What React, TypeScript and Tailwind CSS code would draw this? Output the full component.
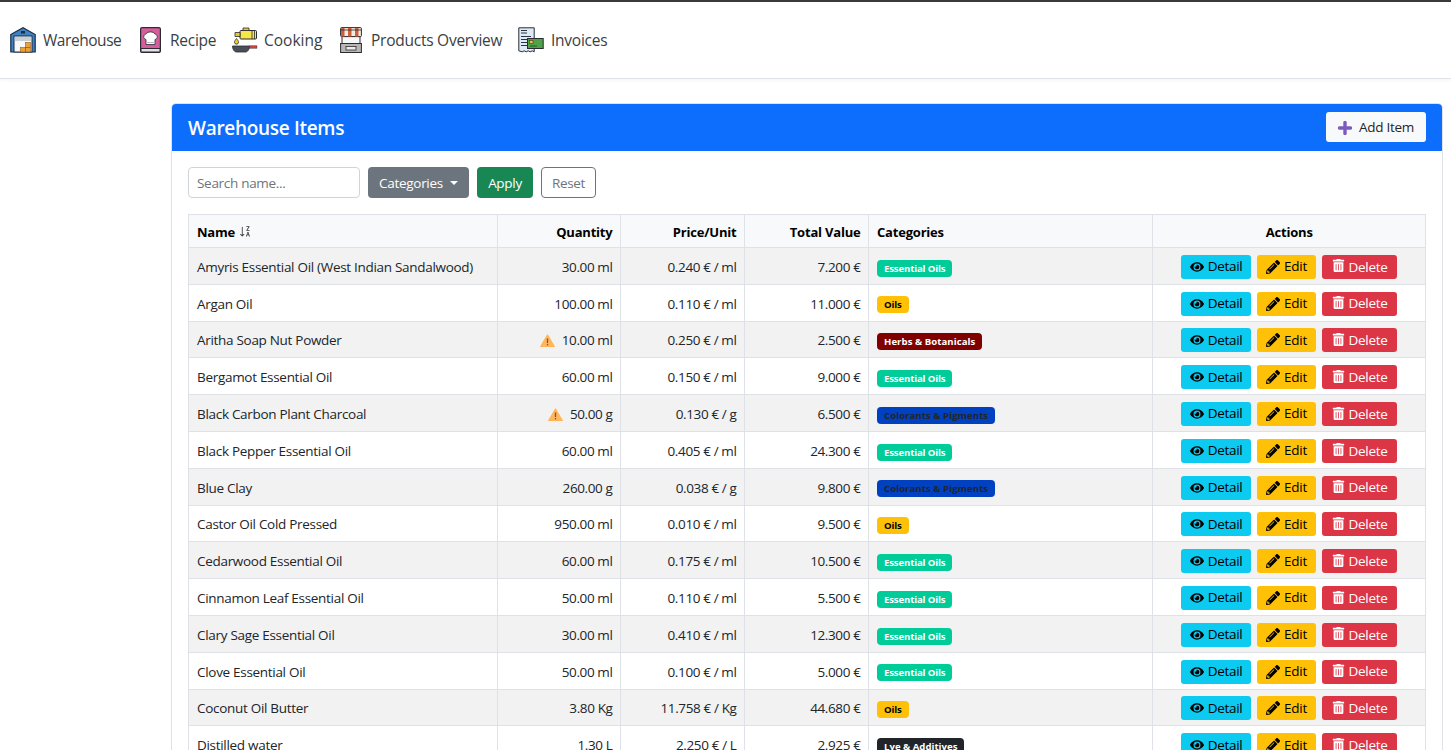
import type { ReactNode } from "react";
import { FaEye, FaPencilAlt, FaTrashAlt } from "react-icons/fa";
import { BsSortAlphaDownAlt } from "react-icons/bs";

const SEGOE = "font-['Open_Sans',sans-serif]";

type Cat = "essential" | "oils" | "herbs" | "colorants" | "lye";

const CATS: Record<Cat, { label: string; cls: string }> = {
  essential: { label: "Essential Oils", cls: "bg-[#00cc99] text-white tracking-[-0.15px]" },
  oils: { label: "Oils", cls: "bg-[#ffc107] text-black tracking-[-0.15px]" },
  herbs: { label: "Herbs & Botanicals", cls: "bg-[#800000] text-white tracking-[0.05px]" },
  colorants: { label: "Colorants & Pigments", cls: "bg-[#0041c2] text-[#212529] tracking-[0.05px]" },
  lye: { label: "Lye & Additives", cls: "bg-[#212529] text-white" },
};

const items: { name: string; qty: string; price: string; total: string; cat: Cat; warn?: boolean }[] = [
  { name: "Amyris Essential Oil (West Indian Sandalwood)", qty: "30.00 ml", price: "0.240 € / ml", total: "7.200 €", cat: "essential" },
  { name: "Argan Oil", qty: "100.00 ml", price: "0.110 € / ml", total: "11.000 €", cat: "oils" },
  { name: "Aritha Soap Nut Powder", qty: "10.00 ml", price: "0.250 € / ml", total: "2.500 €", cat: "herbs", warn: true },
  { name: "Bergamot Essential Oil", qty: "60.00 ml", price: "0.150 € / ml", total: "9.000 €", cat: "essential" },
  { name: "Black Carbon Plant Charcoal", qty: "50.00 g", price: "0.130 € / g", total: "6.500 €", cat: "colorants", warn: true },
  { name: "Black Pepper Essential Oil", qty: "60.00 ml", price: "0.405 € / ml", total: "24.300 €", cat: "essential" },
  { name: "Blue Clay", qty: "260.00 g", price: "0.038 € / g", total: "9.800 €", cat: "colorants" },
  { name: "Castor Oil Cold Pressed", qty: "950.00 ml", price: "0.010 € / ml", total: "9.500 €", cat: "oils" },
  { name: "Cedarwood Essential Oil", qty: "60.00 ml", price: "0.175 € / ml", total: "10.500 €", cat: "essential" },
  { name: "Cinnamon Leaf Essential Oil", qty: "50.00 ml", price: "0.110 € / ml", total: "5.500 €", cat: "essential" },
  { name: "Clary Sage Essential Oil", qty: "30.00 ml", price: "0.410 € / ml", total: "12.300 €", cat: "essential" },
  { name: "Clove Essential Oil", qty: "50.00 ml", price: "0.100 € / ml", total: "5.000 €", cat: "essential" },
  { name: "Coconut Oil Butter", qty: "3.80 Kg", price: "11.758 € / Kg", total: "44.680 €", cat: "oils" },
  { name: "Distilled water", qty: "1.30 L", price: "2.250 € / L", total: "2.925 €", cat: "lye" },
];

const WarehouseIcon = () => (
  <svg viewBox="0 0 26 26" className="w-[26px] h-[26px]">
    <path d="M.8 7.500 13 .8l12.200 6.700V25H.8z" fill="#3d83c4" stroke="#1d2d44" strokeWidth="1.200" />
    <rect x="4" y="9" width="18" height="16" fill="#f6f8fa" stroke="#1d2d44" />
    <path d="M4 11h18M4 13h18" stroke="#9aa6b2" />
    <rect x="11" y="4" width="4" height="2.500" fill="#1d2d44" />
    <rect x="10.500" y="20.500" width="5" height="4.500" fill="#f0a030" stroke="#7a4a10" strokeWidth=".5" />
    <rect x="15.500" y="20.500" width="5" height="4.500" fill="#f0a030" stroke="#7a4a10" strokeWidth=".5" />
    <rect x="15.500" y="15.500" width="5" height="5" fill="#f0a030" stroke="#7a4a10" strokeWidth=".5" />
  </svg>
);

const RecipeIcon = () => (
  <svg viewBox="0 0 21 26" className="w-[21px] h-[26px]">
    <rect x=".6" y=".6" width="19.800" height="24.800" rx="1.500" fill="#d65f9b" stroke="#2b2b33" strokeWidth="1.200" />
    <path d="M1 21.500h19v3.500H1z" fill="#ecdce6" stroke="#2b2b33" />
    <path d="M6 12.500c-3-.5-3-5 0-5.500 1.200-2.800 7.800-2.800 9 0 3 .5 3 5 0 5.500V17.500H6z" fill="#fff" stroke="#2b2b33" strokeWidth=".8" />
    <path d="M6 15.500h9" stroke="#b8b8c0" />
  </svg>
);

const CookingIcon = () => (
  <svg viewBox="0 0 26 26" className="w-[26px] h-[26px]">
    <rect x="8" y="3.500" width="16.500" height="8.500" rx="1" fill="#f7e64a" stroke="#2b2b33" />
    <path d="M11 1h6v2.500h-6z" fill="#e8c630" stroke="#2b2b33" strokeWidth=".8" />
    <path d="M3 5.500h5v4H3z" fill="#e8c630" stroke="#2b2b33" strokeWidth=".8" />
    <path d="M20 3.500v8.500M22.500 3.500v8.500" stroke="#2b2b33" strokeWidth=".8" />
    <path d="M4.500 11.500c1.500 2 2 2.700 2 3.700a2 2 0 0 1-4 0c0-1 .5-1.700 2-3.700z" fill="#f4d320" stroke="#2b2b33" strokeWidth=".8" />
    <path d="M.5 19h17c0 3.500-2 6-4 6H4.500c-2 0-4-2.500-4-6z" fill="#4a4f57" stroke="#2b2b33" strokeWidth=".8" />
    <rect x="17.500" y="18.800" width="7.500" height="2.400" fill="#c8423a" stroke="#2b2b33" strokeWidth=".4" />
  </svg>
);

const StoreIcon = () => (
  <svg viewBox="0 0 22 26" className="w-[22px] h-[26px]">
    <path d="M2 9h18v9H2z" fill="#f8f8f8" stroke="#2b2b33" />
    <rect x=".6" y="16.500" width="20.800" height="9" fill="#b9b5b0" stroke="#2b2b33" />
    <rect x="6" y="19.500" width="10" height="3.500" fill="#ececec" stroke="#2b2b33" strokeWidth=".8" />
    <rect x=".6" y=".6" width="20.800" height="9" rx="1" fill="#f3ece2" stroke="#2b2b33" />
    <path d="M1 1h3.500v8.500H1zM8 1h3.500v8.500H8zM15 1h3.500v8.500H15z" fill="#cf5f38" />
    <path d="M.6 3h20.800" stroke="#2b2b33" strokeWidth=".8" />
  </svg>
);

const InvoiceIcon = () => (
  <svg viewBox="0 0 26 26" className="w-[26px] h-[26px]">
    <path d="M.8.8h15.400v24l-2-1-2 1-2-1-2 1-2-1-2 1-3.400-1z" fill="#dcebf5" stroke="#2b2b33" />
    <path d="M3 3.500h6M3 6h6M3 9.500h10M3 12.500h6M3 15.500h6M3 18.500h6" stroke="#2b3440" strokeWidth="1" />
    <rect x="9.500" y="11.500" width="15.700" height="10" fill="#4fa14a" stroke="#2b2b33" />
    <rect x="11.500" y="13.500" width="3.500" height="3" fill="#f0c040" stroke="#2b2b33" strokeWidth=".5" />
    <path d="M12 19h7" stroke="#235f24" />
  </svg>
);

const NavItem = ({ icon, label, className }: { icon: ReactNode; label: string; className: string }) => (
  <a className={`flex items-center h-[26px] text-[15.5px] text-[#3a3f45] ${className}`}>
    {icon}
    <span className="mt-[2px]">{label}</span>
  </a>
);

const Warn = () => (
  <svg viewBox="0 0 16 14" className="inline-block w-[15px] h-[13px] mr-[7px] align-[-2px]">
    <path d="M8 .8 15.500 13.500H.5z" fill="#ffb65c" stroke="#ffb04f" strokeLinejoin="round" />
    <rect x="7.300" y="4.800" width="1.400" height="5" fill="#7a5a30" />
    <rect x="7.300" y="10.800" width="1.400" height="1.400" fill="#7a5a30" />
  </svg>
);

const Btn = ({ cls, icon, label, labelCls = "" }: { cls: string; icon: ReactNode; label: string; labelCls?: string }) => (
  <button className={`h-6 flex items-center justify-center gap-[4px] rounded-[3px] text-[13.5px] tracking-[-0.3px] leading-none ${cls}`}>
    {icon}
    <span className={labelCls}>{label}</span>
  </button>
);

const th = "border border-[#dee2e6] bg-[#f8f9fa] pl-2 pr-[7.5px] pt-[3px] font-bold text-[13px] tracking-[-0.2px] text-black";
const td = "border border-[#dee2e6] pl-2 pr-[7.5px] pt-[2px] h-[36.8px] text-[13.5px] text-[#212529]";
const num = "text-right tracking-[-0.38px]";

export default function App() {
  return (
    <div className={`h-[750px] overflow-hidden bg-white ${SEGOE}`}>
      <nav className="h-[79px] border-t-2 border-b border-t-[#3a3a3a] border-b-[#dee2e6] flex items-center pl-[10px] shadow-[0_1px_4px_rgba(0,0,0,0.05)]">
        <NavItem icon={<WarehouseIcon />} label="Warehouse" className="w-[130px] gap-[7px] tracking-[-0.45px]" />
        <NavItem icon={<RecipeIcon />} label="Recipe" className="w-[92px] gap-[9px] tracking-[-0.25px]" />
        <NavItem icon={<CookingIcon />} label="Cooking" className="w-[108px] gap-[6px]" />
        <NavItem icon={<StoreIcon />} label="Products Overview" className="w-[178px] gap-[9px] tracking-[-0.25px]" />
        <NavItem icon={<InvoiceIcon />} label="Invoices" className="w-[100px] gap-[7px] tracking-[-0.25px]" />
      </nav>

      <main className="pt-[24px] pl-[171px] pr-[8px]">
        <section className="border border-[#dee2e6] rounded-[5px] overflow-hidden">
          <header className="h-[47px] bg-[#0d6efd] flex items-center justify-between pl-4 pr-4">
            <h1 className="pt-[2px] text-[19px] tracking-[-0.3px] font-semibold text-white">Warehouse Items</h1>
            <button className="h-[30px] w-[100px] mb-[2px] pt-[2px] bg-[#f8f9fa] rounded-[3px] flex items-center justify-center gap-[7px] text-[13.5px] tracking-[-0.3px] text-[#212529]">
              <svg viewBox="0 0 14 14" className="w-[14px] h-[14px]">
                <path d="M7 1.500v11M1.500 7h11" stroke="#7a5cc0" strokeWidth="3.400" strokeLinecap="round" />
              </svg>
              Add Item
            </button>
          </header>

          <div className="px-4 pt-4">
            <div className="flex gap-2 mb-4 text-[13.5px] tracking-[-0.3px]">
              <input
                placeholder="Search name..."
                className="w-[172px] h-[31px] px-2 border border-[#ced4da] rounded-[4px] placeholder:text-[#6c757d]"
              />
              <button className="w-[101px] h-[31px] pt-[1px] bg-[#6c757d] text-white rounded-[4px] flex items-center justify-center gap-[7px]">
                Categories
                <span className="border-t-[4px] border-x-[4px] border-x-transparent border-t-white" />
              </button>
              <button className="w-[56px] h-[31px] pt-[1px] bg-[#198754] text-white rounded-[4px]">Apply</button>
              <button className="w-[55px] h-[31px] pt-[1px] border border-[#6c757d] text-[#6c757d] rounded-[4px]">Reset</button>
            </div>

            <table className="w-[1237px] table-fixed border-collapse">
              <colgroup>
                <col className="w-[309px]" />
                <col className="w-[123px]" />
                <col className="w-[124px]" />
                <col className="w-[124px]" />
                <col className="w-[284px]" />
                <col className="w-[273px]" />
              </colgroup>
              <thead>
                <tr className="h-[33px]">
                  <th className={`${th} text-left`}>
                    <span className="inline-flex items-center gap-[4px]">
                      Name
                      <BsSortAlphaDownAlt size={13} className="text-[#333] -mt-[2px]" />
                    </span>
                  </th>
                  <th className={`${th} text-right`}>Quantity</th>
                  <th className={`${th} text-right`}>Price/Unit</th>
                  <th className={`${th} text-right`}>Total Value</th>
                  <th className={`${th} text-left`}>Categories</th>
                  <th className={`${th} text-center`}>Actions</th>
                </tr>
              </thead>
              <tbody>
                {items.map((item, i) => (
                  <tr key={item.name} className={i % 2 === 0 ? "bg-[#f2f2f2]" : "bg-white"}>
                    <td className={`${td} tracking-[-0.3px]`}>{item.name}</td>
                    <td className={`${td} ${num}`}>
                      {item.warn && <Warn />}
                      {item.qty}
                    </td>
                    <td className={`${td} ${num}`}>{item.price}</td>
                    <td className={`${td} ${num}`}>{item.total}</td>
                    <td className={td}>
                      <span className={`inline-block rounded-[4px] px-[7px] text-[9.6px] font-bold leading-[17px] align-middle ${CATS[item.cat].cls}`}>
                        {CATS[item.cat].label}
                      </span>
                    </td>
                    <td className={`${td} !px-0`}>
                      <div className="flex justify-center gap-[6px]">
                        <Btn cls="w-[70px] bg-[#0dcaf0] text-black" icon={<FaEye size={14} />} label="Detail" />
                        <Btn cls="w-[59px] bg-[#ffc107] text-black" icon={<FaPencilAlt size={14} />} label="Edit" />
                        <Btn cls="w-[75px] bg-[#dc3545] text-white" icon={<FaTrashAlt size={13} className="-mt-[2px]" />} label="Delete" labelCls="mt-[1px]" />
                      </div>
                    </td>
                  </tr>
                ))}
              </tbody>
            </table>
          </div>
        </section>
      </main>
    </div>
  );
}
